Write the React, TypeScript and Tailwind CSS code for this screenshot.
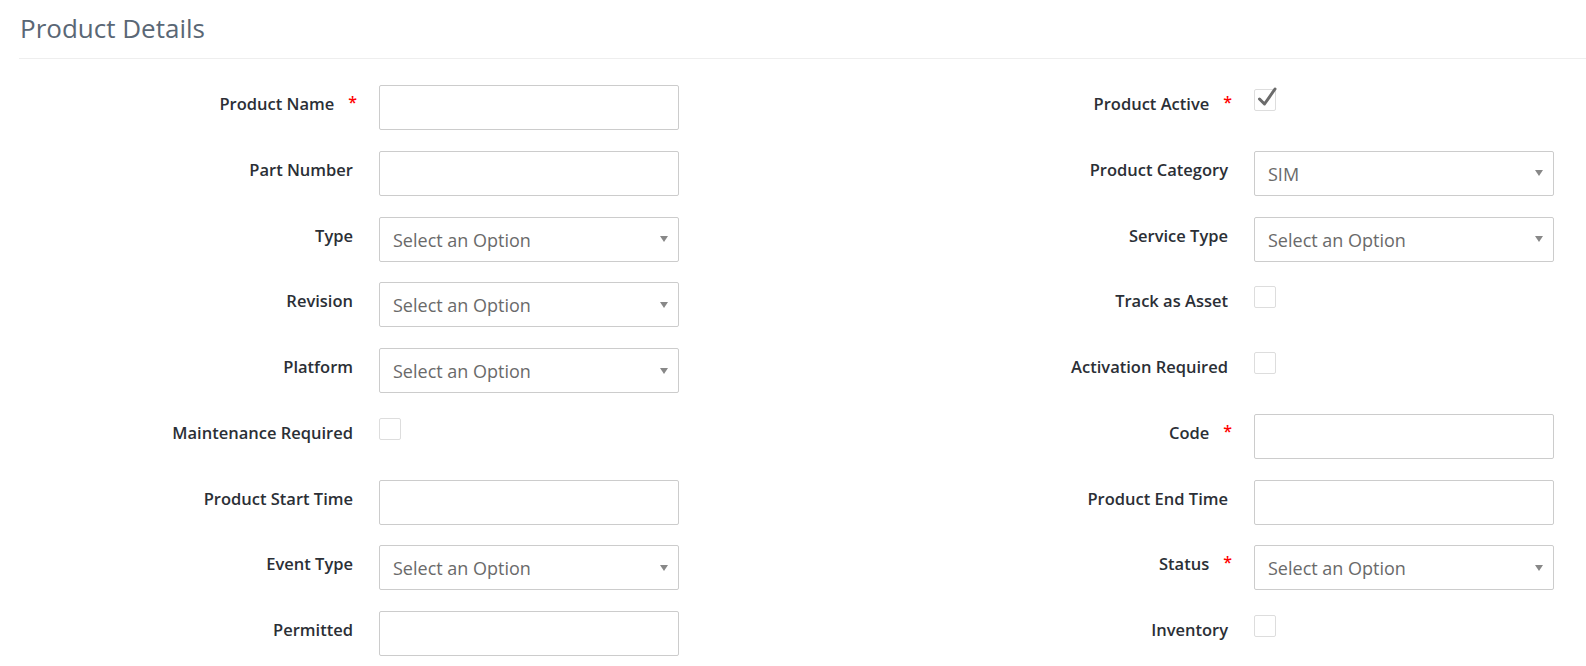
const leftFields = [
  { label: "Product Name", required: true, kind: "text" },
  { label: "Part Number", kind: "text" },
  { label: "Type", kind: "select" },
  { label: "Revision", kind: "select" },
  { label: "Platform", kind: "select" },
  { label: "Maintenance Required", kind: "checkbox" },
  { label: "Product Start Time", kind: "text" },
  { label: "Event Type", kind: "select" },
  { label: "Permitted", kind: "text" },
];

const rightFields = [
  { label: "Product Active", required: true, kind: "checkbox", checked: true },
  { label: "Product Category", kind: "select", value: "SIM" },
  { label: "Service Type", kind: "select" },
  { label: "Track as Asset", kind: "checkbox" },
  { label: "Activation Required", kind: "checkbox" },
  { label: "Code", required: true, kind: "text" },
  { label: "Product End Time", kind: "text" },
  { label: "Status", required: true, kind: "select" },
  { label: "Inventory", kind: "checkbox" },
];

type Field = {
  label: string;
  required?: boolean;
  kind: string;
  checked?: boolean;
  value?: string;
};

const Control = ({ field }: { field: Field }) => {
  if (field.kind === "checkbox") {
    return (
      <div className="relative mt-[4px] w-[22px] h-[22px] border border-[#dddddd] rounded-[2px] bg-white">
        {field.checked && (
          <svg
            className="absolute left-[1px] top-[-5px]"
            width="22"
            height="24"
            viewBox="0 0 22 24"
          >
            <path
              d="M3.5 14 L8.5 19 L19 4"
              fill="none"
              stroke="#6b6b6b"
              strokeWidth="3"
              strokeLinecap="round"
              strokeLinejoin="round"
            />
          </svg>
        )}
      </div>
    );
  }
  if (field.kind === "select") {
    return (
      <div className="w-[300px] h-[45px] border border-[#cccccc] rounded-[2px] bg-white flex items-center justify-between pl-[13px] pr-[10px]">
        <span className="pt-[2px] text-[18px] text-[#6a6a6a]">
          {field.value ?? "Select an Option"}
        </span>
        <svg width="8" height="6" viewBox="0 0 8 6">
          <path d="M0 0 L8 0 L4 6 Z" fill="#888888" />
        </svg>
      </div>
    );
  }
  return (
    <div className="w-[300px] h-[45px] border border-[#cccccc] rounded-[2px] bg-white" />
  );
};

const Row = ({ field, labelWidth }: { field: Field; labelWidth: string }) => (
  <div className="flex items-start gap-[22px] h-[45px]">
    <div
      className={`${labelWidth} shrink-0 flex justify-end items-start pt-[7px] text-[16.5px] leading-[24px] font-semibold text-[#2b2f36]`}
    >
      <span className={field.required ? "" : "pr-[4px]"}>{field.label}</span>
      {field.required && (
        <span className="ml-[14px] text-[#ff0000] text-[16px] leading-[20px]">*</span>
      )}
    </div>
    <Control field={field} />
  </div>
);

export default function App() {
  return (
    <div
      className="bg-white w-[1586px] h-[666px] overflow-hidden pl-[19px]"
      style={{ fontFamily: "'Open Sans', Lato, sans-serif" }}
    >
      <div className="pt-[10px] pb-[12px] border-b border-[#eeeeee]">
        <h1 className="text-[26px] leading-[36px] text-[#5a6775] pl-[1px]">Product Details</h1>
      </div>
      <div className="flex pt-[26px]">
        <div className="w-[774px] flex flex-col gap-y-[20.75px]">
          {leftFields.map((f) => (
            <Row key={f.label} field={f} labelWidth="w-[338px]" />
          ))}
        </div>
        <div className="flex-1 flex flex-col gap-y-[20.75px]">
          {rightFields.map((f) => (
            <Row key={f.label} field={f} labelWidth="w-[439px]" />
          ))}
        </div>
      </div>
    </div>
  );
}
